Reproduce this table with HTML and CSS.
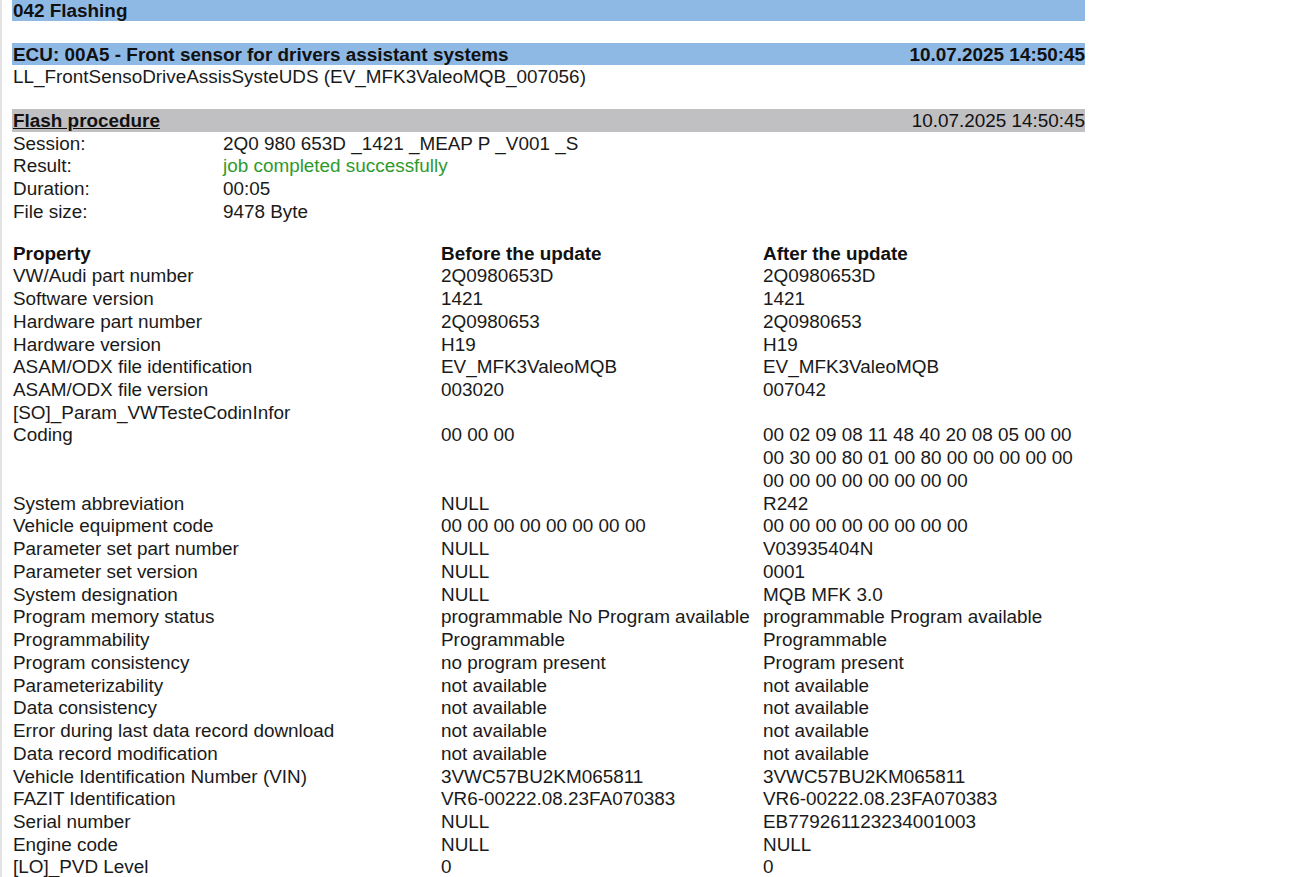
FILE: index.html
```html
<!DOCTYPE html>
<html>
<head>
<meta charset="utf-8">
<title>042 Flashing</title>
<link rel="stylesheet" href="styles.css">
</head>
<body>
<div class="edge"></div>
<div class="page">
  <div class="bar blue title"><span>042 Flashing</span></div>
  <div class="gap-a"></div>
  <div class="bar blue head"><span>ECU: 00A5 - Front sensor for drivers assistant systems</span><span>10.07.2025 14:50:45</span></div>
  <div class="line">LL_FrontSensoDriveAssisSysteUDS (EV_MFK3ValeoMQB_007056)</div>
  <div class="gap-b"></div>
  <div class="bar gray head"><span class="u">Flash procedure</span><span class="plain">10.07.2025 14:50:45</span></div>
  <div class="info">
    <div>Session:</div><div>2Q0 980 653D _1421 _MEAP P _V001 _S</div>
    <div>Result:</div><div class="ok">job completed successfully</div>
    <div>Duration:</div><div>00:05</div>
    <div>File size:</div><div>9478 Byte</div>
  </div>
  <div class="props">
    <div class="th">Property</div><div class="th">Before the update</div><div class="th">After the update</div>
    <div>VW/Audi part number</div><div>2Q0980653D</div><div>2Q0980653D</div>
    <div>Software version</div><div>1421</div><div>1421</div>
    <div>Hardware part number</div><div>2Q0980653</div><div>2Q0980653</div>
    <div>Hardware version</div><div>H19</div><div>H19</div>
    <div>ASAM/ODX file identification</div><div>EV_MFK3ValeoMQB</div><div>EV_MFK3ValeoMQB</div>
    <div>ASAM/ODX file version</div><div>003020</div><div>007042</div>
    <div>[SO]_Param_VWTesteCodinInfor</div><div></div><div></div>
    <div>Coding</div><div>00 00 00</div><div>00 02 09 08 11 48 40 20 08 05 00 00<br>00 30 00 80 01 00 80 00 00 00 00 00<br>00 00 00 00 00 00 00 00</div>
    <div>System abbreviation</div><div>NULL</div><div>R242</div>
    <div>Vehicle equipment code</div><div>00 00 00 00 00 00 00 00</div><div>00 00 00 00 00 00 00 00</div>
    <div>Parameter set part number</div><div>NULL</div><div>V03935404N</div>
    <div>Parameter set version</div><div>NULL</div><div>0001</div>
    <div>System designation</div><div>NULL</div><div>MQB MFK 3.0</div>
    <div>Program memory status</div><div>programmable No Program available</div><div>programmable Program available</div>
    <div>Programmability</div><div>Programmable</div><div>Programmable</div>
    <div>Program consistency</div><div>no program present</div><div>Program present</div>
    <div>Parameterizability</div><div>not available</div><div>not available</div>
    <div>Data consistency</div><div>not available</div><div>not available</div>
    <div>Error during last data record download</div><div>not available</div><div>not available</div>
    <div>Data record modification</div><div>not available</div><div>not available</div>
    <div>Vehicle Identification Number (VIN)</div><div>3VWC57BU2KM065811</div><div>3VWC57BU2KM065811</div>
    <div>FAZIT Identification</div><div>VR6-00222.08.23FA070383</div><div>VR6-00222.08.23FA070383</div>
    <div>Serial number</div><div>NULL</div><div>EB779261123234001003</div>
    <div>Engine code</div><div>NULL</div><div>NULL</div>
    <div>[LO]_PVD Level</div><div>0</div><div>0</div>
  </div>
</div>
</body>
</html>
```
FILE: styles.css
```css
html, body {
  margin: 0;
  padding: 0;
  background: #ffffff;
}
body {
  font-family: "Liberation Sans", Arial, sans-serif;
  font-size: 18.9px;
  line-height: 22.73px;
  color: #1a1a1a;
  overflow: hidden;
}
.edge {
  position: fixed;
  left: 0;
  top: 0;
  bottom: 0;
  width: 2px;
  background: #e3e3e3;
}
.page {
  width: 1073px;
  margin-left: 12px;
}
.bar {
  display: flex;
  justify-content: space-between;
  align-items: center;
  padding-left: 1px;
}
.bar span {
  position: relative;
  top: 1px;
}
.blue {
  background: #8fb9e5;
  font-weight: bold;
  color: #111;
}
.gray {
  background: #c0bfc1;
  font-weight: bold;
  color: #111;
}
.title {
  height: 21px;
  align-items: flex-end;
}
.title span {
  top: 2px;
}
.gap-a {
  height: 21.7px;
}
.head {
  height: 22.5px;
}
.line {
  box-sizing: border-box;
  padding-left: 1px;
  padding-top: 1px;
  height: 22.3px;
}
.gap-b {
  height: 21.7px;
}
.u {
  text-decoration: underline;
}
.plain {
  font-weight: normal;
}
.info {
  display: grid;
  grid-template-columns: 210px 1fr;
  padding-left: 1px;
  margin-top: 1px;
}
.ok {
  color: #2e9a2e;
}
.props {
  display: grid;
  grid-template-columns: 428px 322px 1fr;
  padding-left: 1px;
  margin-top: 19px;
}
.th {
  font-weight: bold;
  color: #111;
}
```
